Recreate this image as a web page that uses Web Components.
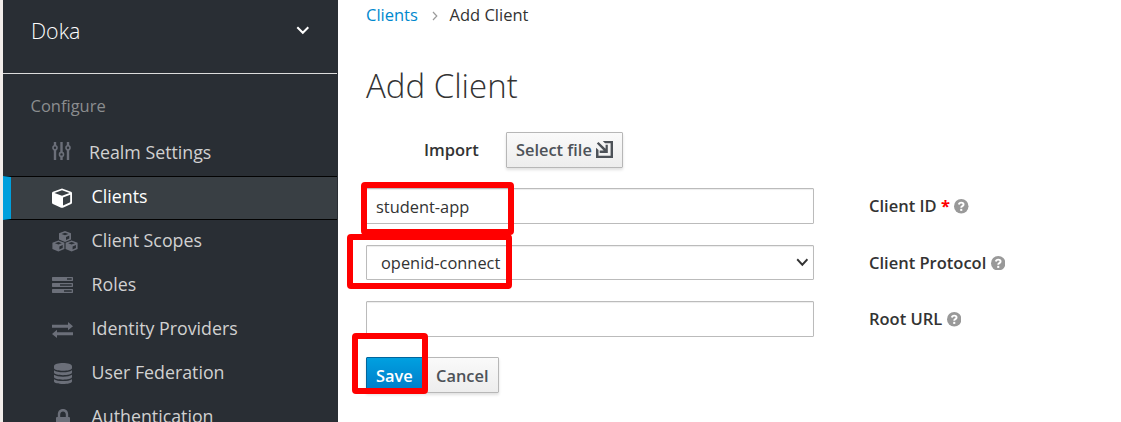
<!DOCTYPE html>
<html lang="en">
<head>
<meta charset="utf-8">
<title>Add Client</title>
<style>
html, body { margin: 0; height: 100%; overflow: hidden; background: #fff; font-family: "Open Sans", "Noto Sans", sans-serif; color: #333; }
</style>
</head>
<body>
<admin-console></admin-console>
<script>
const define = (name, html, init) => {
  const template = document.createElement('template');
  template.innerHTML = html;
  customElements.define(name, class extends HTMLElement {
    constructor() {
      super();
      this.attachShadow({ mode: 'open' }).append(template.content.cloneNode(true));
    }
    connectedCallback() { if (init) init(this, this.shadowRoot); }
  });
};

const icons = {
  sliders: [19, 18, '<g fill="none" stroke="currentColor" stroke-width="1.6"><circle cx="3" cy="5.8" r="2"/><circle cx="9.500" cy="12.400" r="2"/><circle cx="16" cy="5.8" r="2"/></g><path d="M1.800 0h2.400v4H1.800zM1.800 7.600h2.400V18H1.800zM8.300 0h2.400v10.600H8.300zM8.300 14.200h2.400V18H8.300zM14.800 0h2.400v4h-2.400zM14.800 7.600h2.400V18h-2.400z" fill="currentColor"/>'],
  cube: [20, 20, '<path fill="currentColor" fill-rule="evenodd" d="M10 .4 19 3.7Q20 4.1 20 5.2V14.4Q20 15.4 19.1 15.9L10.9 19.7Q10 20 9.1 19.7L.9 15.9Q0 15.4 0 14.4V5.2Q0 4.1 1 3.7ZM10 2.2 2.4 5 10 7.8 17.6 5ZM11 9.5V17.6L18.2 14.3V6.8Z"/>'],
  cubes: [26, 21, '<g fill="currentColor" fill-rule="evenodd"><path d="M13 0 19 2.3V8.5L13 11.1 7 8.5V2.3ZM13 1.7 9.600 2.900 13 4.200 16.400 2.900ZM14 6V9.100L17.300 7.600V4.600Z"/><path transform="translate(-6.600 9.400)" d="M13 0 19 2.3V8.5L13 11.1 7 8.5V2.3ZM13 1.7 9.600 2.900 13 4.200 16.400 2.900ZM14 6V9.100L17.300 7.600V4.600Z"/><path transform="translate(6.600 9.400)" d="M13 0 19 2.3V8.5L13 11.1 7 8.5V2.3ZM13 1.7 9.600 2.900 13 4.200 16.400 2.900ZM14 6V9.100L17.300 7.600V4.600Z"/></g>'],
  server: [21, 16, '<path fill="currentColor" fill-rule="evenodd" d="M.5 0h20l.5.5v3l-.5.5H.5L0 3.500V.5ZM15 1.300v1.400h4.700V1.300ZM.5 6h20l.5.500v3l-.5.500H.5L0 9.500v-3ZM8 7.300v1.400h11.700V7.300ZM.5 12h20l.5.500v3l-.5.500H.5L0 15.500v-3ZM12 13.300v1.400h7.700v-1.400Z"/>'],
  exchange: [21, 16, '<path fill="currentColor" d="M0 2.700h16V0l5 4.200-5 4V5.800H0ZM21 10.200H5V7.700L0 12l5 4v-2.700H21Z"/>'],
  database: [18, 21, '<path fill="currentColor" d="M0 3.200C0-1 18-1 18 3.200V5C18 8.700 0 8.700 0 5ZM0 7.300Q3 9.300 9 9.300T18 7.300V9.500C18 13 0 13 0 9.500ZM0 11.800Q3 13.700 9 13.700T18 11.800V14C18 17.500 0 17.500 0 14ZM0 16.200Q3 18.100 9 18.100T18 16.200V18.200C18 21.900 0 21.900 0 18.200Z"/>'],
  lock: [14, 18, '<path fill="currentColor" fill-rule="evenodd" d="M1.800 8V5.500C1.800-1.700 12.200-1.700 12.200 5.500V8H13q1 0 1 1v8q0 1-1 1H1q-1 0-1-1V9q0-1 1-1ZM4.200 8h5.600V5.500C9.800 1.500 4.200 1.500 4.200 5.500Z"/>'],
  chevron: [14, 9, '<path d="m1.300 1.300 5.500 5.500 5.500-5.500" fill="none" stroke="currentColor" stroke-width="2"/>'],
  angle: [6, 10, '<path d="M1 1 4.800 5 1 9" fill="none" stroke="currentColor" stroke-width="1.200"/>'],
  importer: [17, 17, '<path fill="currentColor" d="M6.800 0H17v17H0V6.800L2.500 9v5.700h12.100V2.300H9Z"/><path fill="currentColor" d="M.8 2.400 2.500.9 9.600 7.700V3.700h2.200v8.200H3.700V9.500h4Z"/>'],
  help: [14, 14, '<circle cx="7" cy="7" r="7" fill="#999"/><path d="M4.700 5.300Q5 3.500 7 3.500 9.200 3.500 9.200 5.200 9.200 6.200 8 6.900 7 7.400 7 8.500" fill="none" stroke="#fff" stroke-width="1.900"/><path fill="#fff" d="M6 9.500h2v2H6z"/>']
};

define('ui-icon', '<style>:host{display:block;flex:none;line-height:0}svg{display:block}</style><div></div>', (el, root) => {
  const [w, h, body] = icons[el.getAttribute('name')];
  root.querySelector('div').innerHTML =
    `<svg width="${el.getAttribute('w') || w}" height="${el.getAttribute('h') || h}" viewBox="0 0 ${w} ${h}" preserveAspectRatio="none">${body}</svg>`;
});

define('nav-item', `<style>
:host{display:flex;box-sizing:border-box;height:44px;border:1px solid transparent;border-width:1px 0;padding:0 0 0 49px;color:#d1d1d1;font-size:17.8px}
:host([active]){background:#393f44;border-color:#030303;color:#fff;padding-left:41px;border-left:8px solid #00a0dd}
.icon{width:var(--gap,39.6px);color:#6b6f79;padding-top:var(--icon-top,12px)}
:host([active]) .icon{color:#fff}
.label{line-height:24px;padding-top:7px;white-space:nowrap}
</style><div class="icon"><slot name="icon"></slot></div><div class="label"><slot></slot></div>`);

define('realm-picker', `<style>
:host{display:flex;box-sizing:border-box;height:74px;border-bottom:1px solid #dcdcdc;padding:15px 27px 0 28px;margin-right:1px;justify-content:space-between;color:#fff;font-size:21.4px;font-weight:300;line-height:32px}
ui-icon{padding-top:11px}
</style><span><slot></slot></span><ui-icon name="chevron"></ui-icon>`);

define('side-bar', `<style>
:host{display:block;box-sizing:border-box;width:338px;height:422px;overflow:hidden;background:#292e34;border-left:3px solid #f1edea;flex:none}
h2{margin:0;padding:20px 0 0 27.500px;height:38px;line-height:24px;font-size:16.5px;font-weight:400;color:#8b8d8f}
nav{margin-right:1px}
</style>
<realm-picker>Doka</realm-picker>
<h2>Configure</h2>
<nav>
<nav-item style="--gap:37px;--icon-top:9px"><ui-icon slot="icon" name="sliders"></ui-icon>Realm Settings</nav-item>
<nav-item active style="--icon-top:11px"><ui-icon slot="icon" name="cube"></ui-icon>Clients</nav-item>
<nav-item style="--icon-top:10px"><ui-icon slot="icon" name="cubes"></ui-icon>Client Scopes</nav-item>
<nav-item><ui-icon slot="icon" name="server"></ui-icon>Roles</nav-item>
<nav-item><ui-icon slot="icon" name="exchange" style="padding-top:1px"></ui-icon>Identity Providers</nav-item>
<nav-item style="--icon-top:10px"><ui-icon slot="icon" name="database" style="padding-left:2px"></ui-icon>User Federation</nav-item>
<nav-item><ui-icon slot="icon" name="lock" style="padding-left:4px"></ui-icon>Authentication</nav-item>
</nav>`);

define('bread-crumb', `<style>
:host{display:flex;height:30px;line-height:30px;font-size:16.5px;align-items:center}
a{color:#0088ce;width:66px}
ui-icon{width:17.500px;color:#9c9c9c;padding-top:2px}
</style><a>Clients</a><ui-icon name="angle"></ui-icon><span><slot></slot></span>`);

define('ui-button', `<style>
:host{display:flex;box-sizing:border-box;height:36px;border:1px solid #b7b7b7;border-radius:1px;background:linear-gradient(#fafafa,#ededed);box-shadow:0 2px 3px rgba(3,3,3,.12);color:#4d5258;font-size:16.4px;font-weight:600;line-height:34px;padding-left:9px;white-space:nowrap}
:host([primary]){background:linear-gradient(#00a0e0,#007bc8);border-color:#00659c;color:#fff}
::slotted(ui-icon){margin:8px 0 0 4px}
</style><slot></slot>`);

define('text-field', `<style>
:host{display:flex;box-sizing:border-box;width:448px;height:36px;border:1px solid #bbb;border-radius:1px;box-shadow:inset 0 1px 1px rgba(3,3,3,.075);font-size:16.4px;line-height:36px;padding:0 5px 0 9px;background:#fff;justify-content:space-between;align-items:flex-start}
:host([select]){padding:0 4px 0 14px;height:35px;line-height:34px}
ui-icon{display:none;padding-top:12px}
:host([select]) ui-icon{display:block}
</style><span><slot></slot></span><ui-icon name="chevron" w="13" h="9"></ui-icon>`);

define('form-row', `<style>
:host{display:flex;height:36px}
.label{display:flex;margin-left:55px;font-size:16.5px;font-weight:600;line-height:36px;white-space:pre}
b{color:#f00;font-weight:700}
:host(:not([required])) b{display:none}
.label ui-icon{margin:11px 0 0 4.5px}
</style><slot></slot><div class="label"><slot name="label"></slot><b> *</b><ui-icon name="help" w="14.5" h="14.5"></ui-icon></div>`);

define('mark-box', `<style>:host{display:block;position:absolute;box-sizing:border-box;border:6px solid #f00;border-radius:4px}</style>`);

define('client-form', `<style>
:host{display:block;padding-left:28px;flex:1}
h1{margin:0;padding-top:32px;height:70px;line-height:48px;font-size:33px;font-weight:300;box-sizing:border-box}
.import{display:flex;padding:32px 0 0 58px;height:56px;line-height:36px;font-size:16.5px;font-weight:600}
.import span{width:82px}
.import ui-button{width:117px}
.rows{display:grid;row-gap:20.500px}
.actions{display:flex;padding-top:20px}
.actions ui-button{line-height:36px}
.actions ui-button:first-child{width:57px}
.actions ui-button:last-child{width:76px;padding-left:12px}
</style>
<bread-crumb>Add Client</bread-crumb>
<h1>Add Client</h1>
<div class="import"><span>Import</span><ui-button>Select file<ui-icon name="importer"></ui-icon></ui-button></div>
<div class="rows">
<form-row required><text-field>student-app</text-field><span slot="label">Client ID</span></form-row>
<form-row><text-field select>openid-connect</text-field><span slot="label">Client Protocol</span></form-row>
<form-row><text-field></text-field><span slot="label">Root URL</span></form-row>
</div>
<div class="actions"><ui-button primary>Save</ui-button><ui-button>Cancel</ui-button></div>`);

define('admin-console', `<style>
:host{display:flex;position:relative;width:1121px;height:422px;overflow:hidden}
</style>
<side-bar></side-bar>
<client-form></client-form>
<mark-box style="left:361px;top:182px;width:153px;height:53px"></mark-box>
<mark-box style="left:347px;top:234px;width:165px;height:55px"></mark-box>
<mark-box style="left:352px;top:333px;width:76px;height:61px"></mark-box>`);
</script>
</body>
</html>
